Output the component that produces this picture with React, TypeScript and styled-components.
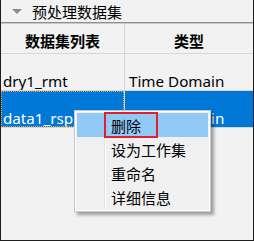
import React from "react";
import styled, { createGlobalStyle } from "styled-components";

const GlobalStyle = createGlobalStyle`
  body {
    margin: 0;
    background: #f2f2f2;
  }
`;

const CJK = `"Noto Sans", "Noto Sans CJK SC", sans-serif`;

const Panel = styled.div`
  position: relative;
  width: 254px;
  height: 241px;
  box-sizing: border-box;
  background: #f2f2f2;
  border: 1px solid #1e1e1e;
  border-top: none;
  font-family: ${CJK};
  color: #000;
  overflow: hidden;
`;

const SectionBar = styled.div`
  display: flex;
  align-items: center;
  height: 22px;
  padding-left: 11px;
  gap: 10px;
  font-size: 15px;
  border-bottom: 1px solid #8f8f8f;
  box-shadow: 0 1px 0 #c9c9c9;
`;

const Caret = styled.span`
  width: 0;
  height: 0;
  border-left: 5px solid transparent;
  border-right: 5px solid transparent;
  border-top: 5px solid #8a8a8a;
`;

const Table = styled.div`
  margin-top: 1px;
`;

const Row = styled.div<{ $height: number; $selected?: boolean }>`
  display: grid;
  grid-template-columns: 123px 1fr;
  height: ${(p) => p.$height}px;
  border-bottom: 1px solid #d6d6d6;
  background: ${(p) => (p.$selected ? "#0078d7" : "transparent")};
  color: ${(p) => (p.$selected ? "#fff" : "#000")};
`;

const HeadCell = styled.div`
  display: flex;
  align-items: center;
  justify-content: center;
  padding-top: 3px;
  font-size: 15px;
  font-weight: 700;
  & + & {
    border-left: 1px solid #d6d6d6;
  }
`;

const Cell = styled.div<{ $focus?: boolean }>`
  display: flex;
  align-items: flex-end;
  padding: 0 4px 0 2px;
  font-size: 15.2px;
  line-height: 18px;
  white-space: nowrap;
  overflow: hidden;
  box-sizing: border-box;
  outline: ${(p) => (p.$focus ? "1px dotted #f0a040" : "none")};
  outline-offset: -1px;
  & + & {
    border-left: 1px solid #d6d6d6;
    padding-left: 4px;
  }
`;

const Menu = styled.div`
  position: absolute;
  left: 73px;
  top: 110px;
  width: 137px;
  box-sizing: border-box;
  padding: 2px;
  background: #f0f0f0;
  border: 1px solid #c8c8c8;
  box-shadow: inset 0 0 0 1px #ffffff, 3px 3px 3px rgba(0, 0, 0, 0.35);
`;

const Gutter = styled.div`
  position: absolute;
  left: 29px;
  top: 3px;
  bottom: 3px;
  width: 1px;
  background: #ffffff;
  border-left: 1px solid #e2e2e2;
`;

const Item = styled.div<{ $active?: boolean }>`
  position: relative;
  height: 24px;
  display: flex;
  align-items: center;
  padding-left: 34px;
  font-size: 15px;
  background: ${(p) => (p.$active ? "#91c9f7" : "transparent")};
`;

const Mark = styled.span`
  position: absolute;
  left: 27px;
  top: -1px;
  width: 54px;
  height: 26px;
  box-sizing: border-box;
  border: 2px solid #e0202a;
`;

const items = ["删除", "设为工作集", "重命名", "详细信息"];

const App = () => (
  <>
    <GlobalStyle />
    <Panel>
      <SectionBar>
        <Caret />
        <span>预处理数据集</span>
      </SectionBar>
      <Table>
        <Row $height={29}>
          <HeadCell>数据集列表</HeadCell>
          <HeadCell>类型</HeadCell>
        </Row>
        <Row $height={36}>
          <Cell>dry1_rmt</Cell>
          <Cell>Time Domain</Cell>
        </Row>
        <Row $height={36} $selected>
          <Cell $focus>data1_rsp</Cell>
          <Cell>Time Domain</Cell>
        </Row>
      </Table>
      <Menu>
        <Gutter />
        {items.map((label, i) => (
          <Item key={label} $active={i === 0}>
            {i === 0 && <Mark />}
            {label}
          </Item>
        ))}
      </Menu>
    </Panel>
  </>
);

export default App;
